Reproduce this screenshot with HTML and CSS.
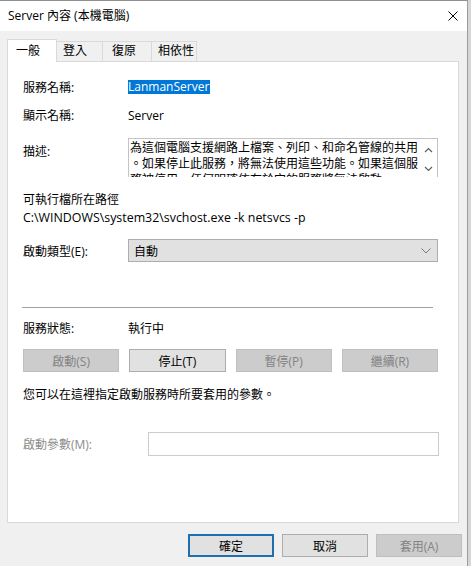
FILE: index.html
```html
<!DOCTYPE html>
<html lang="zh-TW">
<head>
    <meta charset="UTF-8">
    <title>Server 內容 (本機電腦)</title>
    <link rel="stylesheet" href="styles.css">
</head>
<body>
    <div class="window">
        <div class="titlebar">
            <span class="title">Server 內容 (本機電腦)</span>
            <svg class="close" width="10" height="10" viewBox="0 0 10 10">
                <path d="M0.5 0.5 L9.5 9.5 M9.5 0.5 L0.5 9.5" stroke="#000" stroke-width="1" fill="none"/>
            </svg>
        </div>
        <div class="client">
            <div class="tabs">
                <div class="tab active">一般</div>
                <div class="tab t-login">登入</div>
                <div class="tab t-recover">復原</div>
                <div class="tab t-deps">相依性</div>
            </div>
            <div class="panel">
                <div class="row row-name">
                    <span class="label">服務名稱:</span>
                    <span class="selected">LanmanServer</span>
                </div>
                <div class="row row-display">
                    <span class="label">顯示名稱:</span>
                    <span>Server</span>
                </div>
                <div class="row row-desc">
                    <span class="label">描述:</span>
                    <div class="desc-box">
                        <div class="desc-text">為這個電腦支援網路上檔案、列印、和命名管線的共用<br>。如果停止此服務，將無法使用這些功能。如果這個服<br>務被停用，任何明確依存於它的服務將無法啟動。</div>
                        <div class="scroll">
                            <svg width="9" height="6" viewBox="0 0 9 6"><path d="M1 5 L4.5 1.5 L8 5" stroke="#606060" stroke-width="1.2" fill="none"/></svg>
                            <svg width="9" height="6" viewBox="0 0 9 6"><path d="M1 1 L4.5 4.5 L8 1" stroke="#606060" stroke-width="1.2" fill="none"/></svg>
                        </div>
                    </div>
                </div>
                <div class="path-label">可執行檔所在路徑</div>
                <div class="path">C:\WINDOWS\system32\svchost.exe -k netsvcs -p</div>
                <div class="row row-type">
                    <span class="label">啟動類型(E):</span>
                    <div class="combo">
                        <span>自動</span>
                        <svg width="10" height="6" viewBox="0 0 10 6"><path d="M0.5 0.5 L5 5 L9.5 0.5" stroke="#7a7a7a" stroke-width="1" fill="none"/></svg>
                    </div>
                </div>
                <div class="separator"></div>
                <div class="row row-status">
                    <span class="label">服務狀態:</span>
                    <span>執行中</span>
                </div>
                <div class="service-buttons">
                    <button class="btn" disabled>啟動(S)</button>
                    <button class="btn">停止(T)</button>
                    <button class="btn" disabled>暫停(P)</button>
                    <button class="btn" disabled>繼續(R)</button>
                </div>
                <div class="hint">您可以在這裡指定啟動服務時所要套用的參數。</div>
                <div class="row row-params">
                    <span class="label disabled">啟動參數(M):</span>
                    <div class="param-input"></div>
                </div>
            </div>
            <div class="footer">
                <button class="btn default">確定</button>
                <button class="btn">取消</button>
                <button class="btn" disabled>套用(A)</button>
            </div>
        </div>
    </div>
</body>
</html>
```

FILE: styles.css
```css
body {
    margin: 0;
    background-color: #d6d6d6;
    font-family: "Open Sans", "Noto Sans CJK TC", sans-serif;
    font-size: 12px;
    color: #000;
}
.window {
    width: 467px;
    height: 565px;
    border-top: 1px solid #8f8f8f;
    border-right: 1px solid #9c9c9c;
    background-color: #f0f0f0;
    display: flex;
    flex-direction: column;
}
.titlebar {
    height: 30px;
    background-color: #fff;
    display: flex;
    align-items: center;
    justify-content: space-between;
    padding: 0 9px 0 8px;
}
.title {
    margin-top: -2px;
}
.client {
    flex: 1;
    display: flex;
    flex-direction: column;
}
.tabs {
    height: 30px;
    display: flex;
    align-items: flex-end;
    padding-left: 7px;
}
.tab {
    box-sizing: border-box;
    height: 20px;
    line-height: 18px;
    border: 1px solid #d9d9d9;
    border-bottom: none;
    border-left: none;
    background-color: #f0f0f0;
    padding-left: 6px;
}
.tab.active {
    width: 50px;
    height: 23px;
    line-height: 21px;
    margin-bottom: -1px;
    padding-left: 8px;
    border-left: 1px solid #d9d9d9;
    background-color: #fff;
    position: relative;
    z-index: 1;
}
.t-login { width: 46px; }
.t-recover { width: 49px; padding-left: 9px; }
.t-deps { width: 45px; }
.panel {
    box-sizing: border-box;
    height: 462px;
    margin: 0 8px 0 7px;
    border: 1px solid #d9d9d9;
    background-color: #fff;
    padding: 18px 20px 0 15px;
}
.row {
    display: flex;
    align-items: center;
}
.label {
    width: 105px;
    flex: none;
}
.label.disabled {
    width: 125px;
    color: #8c8c8c;
}
.row-name {
    height: 14px;
}
.selected {
    background-color: #0078d7;
    color: #fff;
    line-height: 14px;
    height: 14px;
    padding-right: 1px;
}
.row-display {
    height: 16px;
    margin-top: 13px;
}
.row-desc {
    margin-top: 15px;
    align-items: flex-start;
}
.row-desc .label {
    padding-top: 6px;
    line-height: 16px;
}
.desc-box {
    flex: 1;
    box-sizing: border-box;
    height: 39px;
    border: 1px solid #c4c4c4;
    border-bottom: none;
    display: flex;
    overflow: hidden;
}
.desc-text {
    flex: 1;
    font-family: "Noto Sans CJK TC", sans-serif;
    line-height: 16px;
    white-space: nowrap;
    overflow: hidden;
    padding-left: 1px;
}
.scroll {
    width: 17px;
    display: flex;
    flex-direction: column;
    align-items: center;
    gap: 13px;
    padding-top: 8px;
}
.scroll svg {
    display: block;
}
.path-label {
    margin-top: 15px;
    line-height: 16px;
}
.path {
    margin-top: 1px;
    line-height: 18px;
    font-size: 12.4px;
}
.row-type {
    margin-top: 12px;
}
.combo {
    flex: 1;
    box-sizing: border-box;
    height: 23px;
    border: 1px solid #adadad;
    background-color: #e1e1e1;
    display: flex;
    align-items: center;
    justify-content: space-between;
    padding: 0 6px 0 5px;
}
.separator {
    margin: 45px 5px 0 -1px;
    border-top: 1px solid #a0a0a0;
}
.row-status {
    margin-top: 12px;
    height: 16px;
}
.service-buttons {
    margin-top: 13px;
    display: grid;
    grid-template-columns: repeat(4, 1fr);
    gap: 10px;
}
.btn {
    box-sizing: border-box;
    height: 23px;
    border: 1px solid #adadad;
    background-color: #e1e1e1;
    font: inherit;
    color: #000;
    padding: 0;
}
.btn:disabled {
    background-color: #cccccc;
    border-color: #bfbfbf;
    color: #838383;
}
.hint {
    margin-top: 15px;
    line-height: 16px;
}
.row-params {
    margin-top: 29px;
}
.param-input {
    flex: 1;
    box-sizing: border-box;
    height: 24px;
    margin-right: -1px;
    border: 1px solid #cccccc;
    background-color: #fff;
}
.footer {
    display: flex;
    justify-content: flex-end;
    gap: 8px;
    padding: 11px 5px 0 0;
}
.footer .btn {
    width: 86px;
}
.btn.default {
    border: 2px solid #1e6fb0;
}
```
